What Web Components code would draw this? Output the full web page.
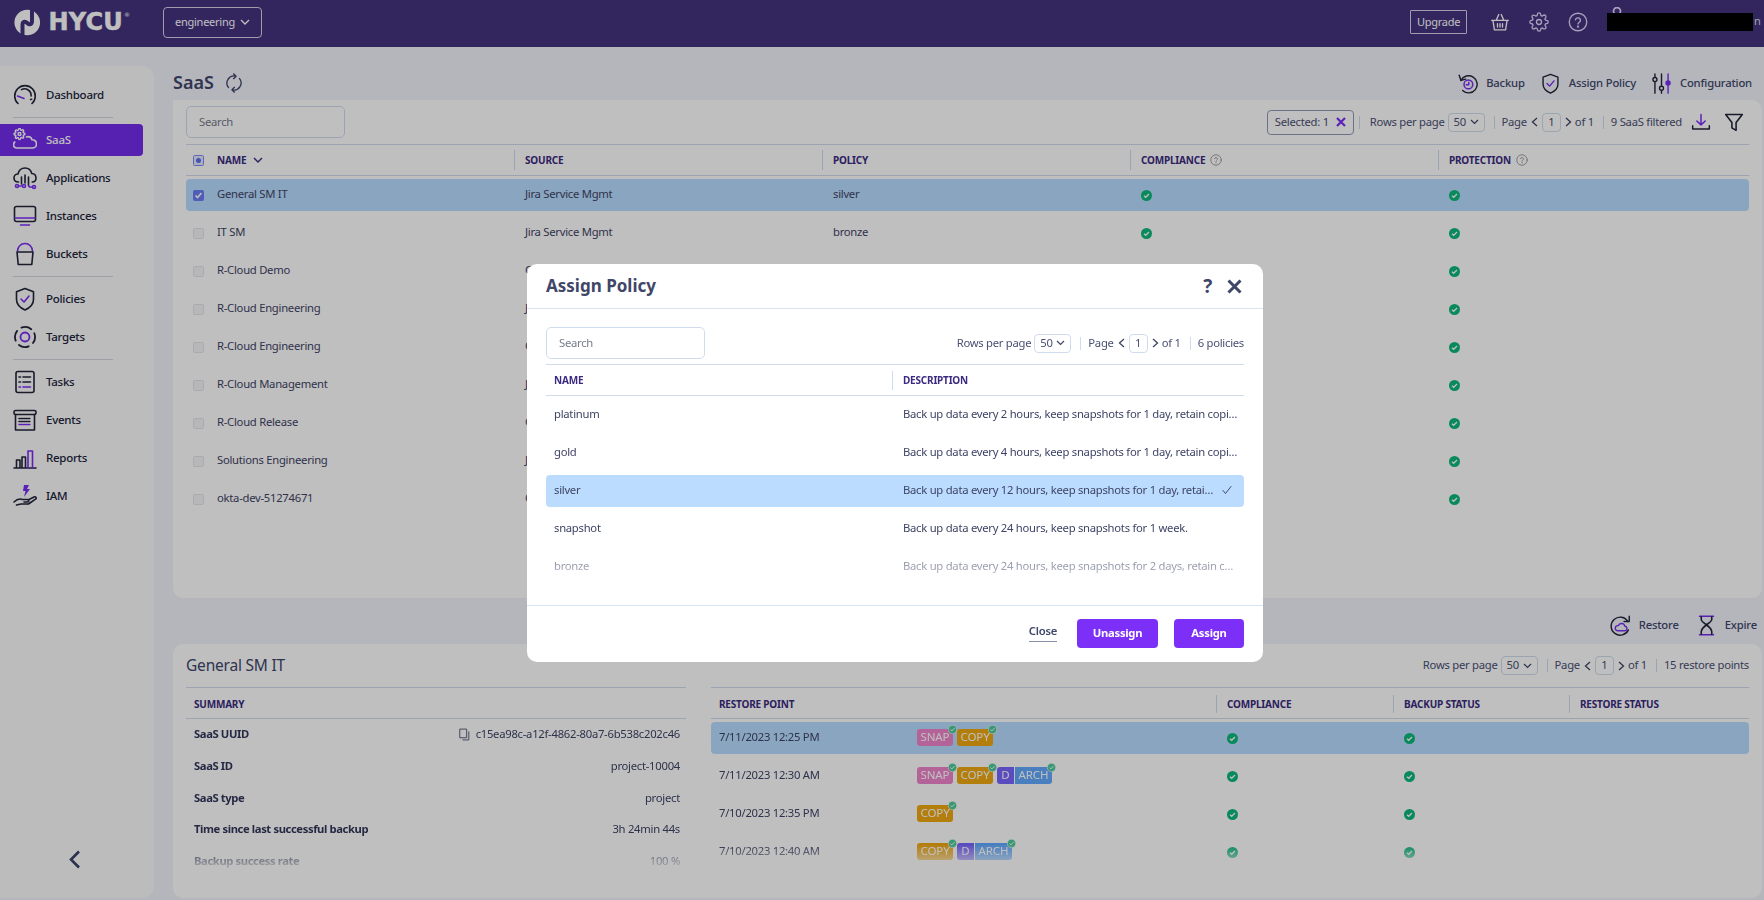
<!DOCTYPE html>
<html lang="en"><head><meta charset="utf-8"><title>HYCU SaaS</title>
<style>
html,body{margin:0;height:900px;overflow:hidden}
body{font:11.25px/1.3 "Noto Sans","Liberation Sans",sans-serif;letter-spacing:-.26px;color:#3e4466;background:#f1f3fa;display:flex;flex-direction:column}
</style></head><body>
<hy-topbar></hy-topbar>
<hy-layout>
  <hy-sidebar slot="side">
    <hy-nav icon="dash">Dashboard</hy-nav><hy-sep></hy-sep>
    <hy-nav icon="saas" active>SaaS</hy-nav>
    <hy-nav icon="apps">Applications</hy-nav>
    <hy-nav icon="monitor">Instances</hy-nav>
    <hy-nav icon="bucket">Buckets</hy-nav><hy-sep></hy-sep>
    <hy-nav icon="shield">Policies</hy-nav>
    <hy-nav icon="target">Targets</hy-nav><hy-sep></hy-sep>
    <hy-nav icon="tasks">Tasks</hy-nav>
    <hy-nav icon="events">Events</hy-nav>
    <hy-nav icon="reports">Reports</hy-nav>
    <hy-nav icon="iam">IAM</hy-nav>
  </hy-sidebar>

  <hy-titlebar title="SaaS">
    <hy-action icon="backup">Backup</hy-action>
    <hy-action icon="shield">Assign Policy</hy-action>
    <hy-action icon="config">Configuration</hy-action>
  </hy-titlebar>

  <hy-panel style="height:498px">
    <hy-toolbar>
      <hy-search slot="left"></hy-search>
      <hy-chip>Selected: 1</hy-chip>
      <hy-pager count="9 SaaS filtered" sep></hy-pager>
      <hy-icon name="download" size="20" style="margin-left:9px"></hy-icon>
      <hy-icon name="filter" size="20" style="margin-left:13px;margin-right:5px"></hy-icon>
    </hy-toolbar>
    <hy-table style="--cols:328px 308px 308px 308px 1fr">
      <hy-row slot="head" head>
        <hy-td pad="7"><hy-box state="mixed"></hy-box><hy-th-label style="margin-left:13px">NAME</hy-th-label><hy-chev style="margin-left:7px"></hy-chev></hy-td>
        <hy-td divider><hy-th-label>SOURCE</hy-th-label></hy-td>
        <hy-td divider><hy-th-label>POLICY</hy-th-label></hy-td>
        <hy-td divider><hy-th-label>COMPLIANCE</hy-th-label><hy-icon name="hint" size="12" style="margin-left:5px"></hy-icon></hy-td>
        <hy-td divider><hy-th-label>PROTECTION</hy-th-label><hy-icon name="hint" size="12" style="margin-left:5px"></hy-icon></hy-td>
      </hy-row>
      <hy-row selected><hy-td pad="7"><hy-box state="checked"></hy-box><span style="margin-left:13px">General SM IT</span></hy-td><hy-td>Jira Service Mgmt</hy-td><hy-td>silver</hy-td><hy-td><hy-ok></hy-ok></hy-td><hy-td><hy-ok></hy-ok></hy-td></hy-row>
      <hy-row><hy-td pad="7"><hy-box></hy-box><span style="margin-left:13px">IT SM</span></hy-td><hy-td>Jira Service Mgmt</hy-td><hy-td>bronze</hy-td><hy-td><hy-ok></hy-ok></hy-td><hy-td><hy-ok></hy-ok></hy-td></hy-row>
      <hy-row><hy-td pad="7"><hy-box></hy-box><span style="margin-left:13px">R-Cloud Demo</span></hy-td><hy-td>C</hy-td><hy-td></hy-td><hy-td></hy-td><hy-td><hy-ok></hy-ok></hy-td></hy-row>
      <hy-row><hy-td pad="7"><hy-box></hy-box><span style="margin-left:13px">R-Cloud Engineering</span></hy-td><hy-td>J</hy-td><hy-td></hy-td><hy-td></hy-td><hy-td><hy-ok></hy-ok></hy-td></hy-row>
      <hy-row><hy-td pad="7"><hy-box></hy-box><span style="margin-left:13px">R-Cloud Engineering</span></hy-td><hy-td>C</hy-td><hy-td></hy-td><hy-td></hy-td><hy-td><hy-ok></hy-ok></hy-td></hy-row>
      <hy-row><hy-td pad="7"><hy-box></hy-box><span style="margin-left:13px">R-Cloud Management</span></hy-td><hy-td>J</hy-td><hy-td></hy-td><hy-td></hy-td><hy-td><hy-ok></hy-ok></hy-td></hy-row>
      <hy-row><hy-td pad="7"><hy-box></hy-box><span style="margin-left:13px">R-Cloud Release</span></hy-td><hy-td>C</hy-td><hy-td></hy-td><hy-td></hy-td><hy-td><hy-ok></hy-ok></hy-td></hy-row>
      <hy-row><hy-td pad="7"><hy-box></hy-box><span style="margin-left:13px">Solutions Engineering</span></hy-td><hy-td>J</hy-td><hy-td></hy-td><hy-td></hy-td><hy-td><hy-ok></hy-ok></hy-td></hy-row>
      <hy-row><hy-td pad="7"><hy-box></hy-box><span style="margin-left:13px">okta-dev-51274671</span></hy-td><hy-td>O</hy-td><hy-td></hy-td><hy-td></hy-td><hy-td><hy-ok></hy-ok></hy-td></hy-row>
    </hy-table>
  </hy-panel>

  <hy-actionbar>
    <hy-action icon="restore">Restore</hy-action>
    <hy-action icon="expire">Expire</hy-action>
  </hy-actionbar>

  <hy-panel style="height:254px" detail>
    <hy-split>
      <hy-section heading="General SM IT">
        <hy-table fade style="--cols:1fr auto;--fade-h:161px;--fade-a:78%;--fade-b:95%;--head-pt:2px">
          <hy-row slot="head" head><hy-td pad="8"><hy-th-label>SUMMARY</hy-th-label></hy-td><hy-td></hy-td></hy-row>
          <hy-row tight><hy-td pad="8"><b>SaaS UUID</b></hy-td><hy-td right><hy-icon name="copy" size="13" style="margin-right:5px"></hy-icon>c15ea98c-a12f-4862-80a7-6b538c202c46</hy-td></hy-row>
          <hy-row tight><hy-td pad="8"><b>SaaS ID</b></hy-td><hy-td right>project-10004</hy-td></hy-row>
          <hy-row tight><hy-td pad="8"><b>SaaS type</b></hy-td><hy-td right>project</hy-td></hy-row>
          <hy-row tight><hy-td pad="8"><b>Time since last successful backup</b></hy-td><hy-td right>3h 24min 44s</hy-td></hy-row>
          <hy-row tight><hy-td pad="8"><b>Backup success rate</b></hy-td><hy-td right>100 %</hy-td></hy-row>
        </hy-table>
      </hy-section>
      <hy-section>
        <hy-pager slot="tools" count="15 restore points"></hy-pager>
        <hy-table fade style="--cols:505px 177px 176px 1fr;--fade-h:161px;--fade-a:78%;--fade-b:95%;--head-pt:2px">
          <hy-row slot="head" head><hy-td pad="8"><hy-th-label>RESTORE POINT</hy-th-label></hy-td><hy-td divider><hy-th-label>COMPLIANCE</hy-th-label></hy-td><hy-td divider><hy-th-label>BACKUP STATUS</hy-th-label></hy-td><hy-td divider><hy-th-label>RESTORE STATUS</hy-th-label></hy-td></hy-row>
          <hy-row selected><hy-td pad="8" style="display:grid;grid-template-columns:198px auto"><span>7/11/2023 12:25 PM</span><hy-badges><hy-badge type="snap" ok>SNAP</hy-badge><hy-badge type="copy" ok>COPY</hy-badge></hy-badges></hy-td><hy-td><hy-ok></hy-ok></hy-td><hy-td><hy-ok></hy-ok></hy-td><hy-td></hy-td></hy-row>
          <hy-row><hy-td pad="8" style="display:grid;grid-template-columns:198px auto"><span>7/11/2023 12:30 AM</span><hy-badges><hy-badge type="snap" ok>SNAP</hy-badge><hy-badge type="copy" ok>COPY</hy-badge><hy-badge type="d" join>D</hy-badge><hy-badge type="arch" ok>ARCH</hy-badge></hy-badges></hy-td><hy-td><hy-ok></hy-ok></hy-td><hy-td><hy-ok></hy-ok></hy-td><hy-td></hy-td></hy-row>
          <hy-row><hy-td pad="8" style="display:grid;grid-template-columns:198px auto"><span>7/10/2023 12:35 PM</span><hy-badges><hy-badge type="copy" ok>COPY</hy-badge></hy-badges></hy-td><hy-td><hy-ok></hy-ok></hy-td><hy-td><hy-ok></hy-ok></hy-td><hy-td></hy-td></hy-row>
          <hy-row><hy-td pad="8" style="display:grid;grid-template-columns:198px auto"><span>7/10/2023 12:40 AM</span><hy-badges><hy-badge type="copy" ok>COPY</hy-badge><hy-badge type="d" join>D</hy-badge><hy-badge type="arch" ok>ARCH</hy-badge></hy-badges></hy-td><hy-td><hy-ok></hy-ok></hy-td><hy-td><hy-ok></hy-ok></hy-td><hy-td></hy-td></hy-row>
        </hy-table>
      </hy-section>
    </hy-split>
  </hy-panel>
</hy-layout>

<hy-modal title="Assign Policy">
  <hy-toolbar modal>
    <hy-search slot="left"></hy-search>
    <hy-pager count="6 policies" plain></hy-pager>
  </hy-toolbar>
  <hy-table fade style="--cols:346px 1fr;--fade-h:209px;--fade-a:68%;--fade-b:96%;--head-h:32px;--head-pt:1px">
    <hy-row slot="head" head><hy-td pad="8"><hy-th-label>NAME</hy-th-label></hy-td><hy-td divider><hy-th-label>DESCRIPTION</hy-th-label></hy-td></hy-row>
    <hy-row><hy-td pad="8">platinum</hy-td><hy-td>Back up data every 2 hours, keep snapshots for 1 day, retain copi…</hy-td></hy-row>
    <hy-row><hy-td pad="8">gold</hy-td><hy-td>Back up data every 4 hours, keep snapshots for 1 day, retain copi…</hy-td></hy-row>
    <hy-row picked><hy-td pad="8">silver</hy-td><hy-td between><span>Back up data every 12 hours, keep snapshots for 1 day, retai…</span><hy-icon name="tick" size="12" style="margin-right:11px"></hy-icon></hy-td></hy-row>
    <hy-row><hy-td pad="8">snapshot</hy-td><hy-td>Back up data every 24 hours, keep snapshots for 1 week.</hy-td></hy-row>
    <hy-row><hy-td pad="8">bronze</hy-td><hy-td>Back up data every 24 hours, keep snapshots for 2 days, retain c…</hy-td></hy-row>
  </hy-table>
  <hy-link slot="footer">Close</hy-link>
  <hy-button slot="footer" style="width:81px">Unassign</hy-button>
  <hy-button slot="footer" style="width:70px">Assign</hy-button>
</hy-modal>

<script>
const P='#7a2cf5';
const GEAR='M12 15a3 3 0 1 0 0-6 3 3 0 0 0 0 6zM19.4 15a1.65 1.65 0 0 0 .33 1.82l.06.06a2 2 0 0 1 0 2.83 2 2 0 0 1-2.83 0l-.06-.06a1.65 1.65 0 0 0-1.82-.33 1.65 1.65 0 0 0-1 1.51V21a2 2 0 0 1-2 2 2 2 0 0 1-2-2v-.09A1.65 1.65 0 0 0 9 19.4a1.65 1.65 0 0 0-1.82.33l-.06.06a2 2 0 0 1-2.83 0 2 2 0 0 1 0-2.83l.06-.06a1.65 1.65 0 0 0 .33-1.82 1.65 1.65 0 0 0-1.51-1H3a2 2 0 0 1-2-2 2 2 0 0 1 2-2h.09A1.65 1.65 0 0 0 4.6 9a1.65 1.65 0 0 0-.33-1.82l-.06-.06a2 2 0 0 1 0-2.83 2 2 0 0 1 2.83 0l.06.06a1.65 1.65 0 0 0 1.82.33H9a1.65 1.65 0 0 0 1-1.51V3a2 2 0 0 1 2-2 2 2 0 0 1 2 2v.09a1.65 1.65 0 0 0 1 1.51 1.65 1.65 0 0 0 1.82-.33l.06-.06a2 2 0 0 1 2.83 0 2 2 0 0 1 0 2.83l-.06.06a1.65 1.65 0 0 0-.33 1.82V9a1.65 1.65 0 0 0 1.51 1H21a2 2 0 0 1 2 2 2 2 0 0 1-2 2h-.09a1.65 1.65 0 0 0-1.51 1z';
const ICONS={
 dash:`<path d="M5 20.5a10.3 10.3 0 1 1 14 0"/><path d="M8.5 6.6a6.6 6.6 0 0 1 9.6 6.4M17.6 16.5l1-.2"/><path stroke="${P}" d="M4.5 13l6.5 2.5"/>`,
 saas:`<g transform="translate(.5 0) scale(.5)" stroke-width="2.8"><path d="${GEAR}"/></g><path d="M13.5 9c2.4-1.2 5 .4 5.5 2.8 2.6-.2 4.5 1.7 4.5 4.2s-2 4-4.2 4H4c-2.3 0-3.5-1.5-3.5-3.2 0-1.2.5-2.2 1.3-2.8"/>`,
 apps:`<path d="M5.5 16C2.800 16 1 14.300 1 12s1.800-4 4-4c.8-3.500 3.500-6 7-6 3.300 0 6 2.300 6.800 5.500 2.500.2 4.200 2.100 4.200 4.500 0 2.300-1.600 4-3.800 4"/><path d="M8.500 11v7M12 9v8M15.500 11v8"/><circle cx="4" cy="20" r="1.500" stroke="${P}"/><path stroke="${P}" d="M5.500 20h3"/><circle cx="11" cy="20" r="1.500" stroke="${P}"/><circle cx="21" cy="21" r="1.500" stroke="${P}"/><path stroke="${P}" d="M15.500 19.500l1 1.500h3"/>`,
 monitor:`<rect x="1.500" y="2.500" width="21" height="15" rx="2"/><path stroke="${P}" d="M2 14h20M7.500 21h9"/>`,
 bucket:`<path stroke="${P}" d="M4.500 9a7.500 7.500 0 0 1 15 0"/><path d="M4 10h16l-1.200 12.500H5.200z"/>`,
 shield:`<path d="M12 1.500l8.500 3.200v7.800c0 5-3.800 8.400-8.500 10.500-4.700-2.100-8.500-5.500-8.500-10.500V4.700z"/><path stroke="${P}" d="M8 12l3 3 5-6"/>`,
 target:`<circle cx="12" cy="12" r="10" stroke-dasharray="10.200 5.500" transform="rotate(-22 12 12)" stroke-width="1.800"/><circle cx="12" cy="12" r="4.500" stroke="${P}" stroke-width="1.800"/>`,
 tasks:`<rect x="3" y="1.500" width="18" height="21" rx="2"/><path d="M10 7h7.500M10 12h7.500M6 7h1.500M6 12h1.500"/><path stroke="${P}" d="M10 17h7.500M6 17h1.500"/>`,
 events:`<rect x="1" y="2.500" width="22" height="4" rx="1.500"/><path d="M2.500 6.500V22h19V6.500"/><path stroke-dasharray="1.200 1.200" d="M6 10.500h12M6 13.500h12"/><path stroke-dasharray="1.200 1.200" stroke="${P}" d="M6 16.500h12"/>`,
 reports:`<path d="M1 22h22M3.500 22v-8h3.500v8M9 22V11h3.500v11"/><path stroke="${P}" d="M15 22V5h4.500v17"/>`,
 iam:`<path fill="${P}" stroke="none" d="M11 1h5l-2 4h3l-6 8 1.500-6H10z"/><path d="M1 18c3-3 6-3.500 8.500-2.500h5c1.800 0 1.800 2.500 0 2.500H11M15 16l6-3c1.800-.8 3 1 1.500 2.200l-7 4.800H8l-4.500 1"/>`,
 backup:`<path d="M4.500 8.500a9.800 9.800 0 1 1 2 11.500"/><path d="M2.500 2.500l2 6 5.500-1.500"/><circle cx="13" cy="13" r="5" stroke="${P}" stroke-width="1.700"/><path stroke="${P}" d="M13.500 10.500v3h-3"/>`,
 config:`<path d="M4.500 1v4M4.500 10v13M12 1v14M12 20v3"/><circle cx="4.500" cy="7.500" r="2.300"/><circle cx="12" cy="17.500" r="2.300"/><path stroke="${P}" d="M19.500 1v8M19.500 14v9"/><circle cx="19.500" cy="11.500" r="2.300" stroke="${P}" fill="${P}"/>`,
 restore:`<path d="M20.500 7.500A10.300 10.300 0 1 0 21 17"/><path d="M22 1.500v6h-6"/><path stroke="${P}" d="M8.500 18h8a2.600 2.600 0 0 0 .5-5.200 4 4 0 0 0-7.600-.6A2.900 2.900 0 0 0 8.500 18z"/>`,
 expire:`<path stroke="${P}" stroke-width="1.800" d="M4 1.500h16M4 22.500h16"/><path stroke-width="1.800" d="M6 2v3c0 4 12 8 12 14v3M18 2v3c0 4-12 8-12 14v3"/>`,
 download:`<path stroke-width="1.800" d="M2 16.500v4h20v-4"/><path stroke="${P}" stroke-width="1.800" d="M12 3v12.500M7 10.800l5 4.700 5-4.700"/>`,
 filter:`<path stroke-width="1.900" d="M2 3h20l-7.500 9.500V22l-5-3v-6.500z"/>`,
 refresh:`<path d="M5.500 17.500A8.500 8.500 0 0 1 14 3.800M11.500 1l3 2.800-3 3"/><path d="M18.500 6.500A8.500 8.500 0 0 1 10 20.200M12.500 23l-3-2.800 3-3"/>`,
 basket:`<path d="M2 10h20M3.500 10l1.800 11.500h13.400L20.500 10M7.500 10l3-7M16.500 10l-3-7M9 14v4M12 14v4M15 14v4"/>`,
 gear:`<path d="${GEAR}"/>`,
 help:`<circle cx="12" cy="12" r="10.500"/><path d="M9 9.300a3 3 0 0 1 5.900.8c0 2-2.900 2.200-2.900 4.400"/><circle cx="12" cy="17.500" r=".6"/>`,
 hint:`<circle cx="12" cy="12" r="10.500"/><path d="M9 9.300a3 3 0 0 1 5.900.8c0 2-2.900 2.200-2.900 4.400M12 17v1"/>`,
 copy:`<path d="M4 2h12v16H4zM20 7v15H9"/>`,
 tick:`<path d="M4 13l5 6L20 5"/>`,
 user:`<circle cx="12" cy="7" r="5"/>`
};
const define=(name,css,html)=>{
  customElements.define(name,class extends HTMLElement{
    connectedCallback(){
      if(this.shadowRoot)return;
      const root=this.attachShadow({mode:'open'});
      const body=typeof html==='function'?html(this):html;
      root.innerHTML=`<style>${css}</style>${body}`;
    }
  });
};
const svg=(name,size,color)=>`<svg viewBox="0 0 24 24" width="${size}" height="${size}" fill="none" stroke="${color||'currentColor'}" stroke-width="1.600" stroke-linecap="round" stroke-linejoin="round" style="display:block;flex:none">${ICONS[name]}</svg>`;

define('hy-icon',':host{display:inline-flex;flex:none;color:#22243a}:host([name=hint]){color:#8a8a8a}:host([name=copy]){color:#44486a}',
  e=>svg(e.getAttribute('name'),e.getAttribute('size')||24));

define('hy-topbar',`
:host{display:flex;align-items:center;height:47px;flex:none;box-sizing:border-box;background:#44337f;color:#fff;padding:0 11px 3px 0;position:relative;z-index:1}
.logo{display:flex;align-items:center;margin-left:13px;width:117px}
.word{font:700 24px/1 "DejaVu Sans",sans-serif;letter-spacing:.2px;-webkit-text-stroke:.5px #fff;margin-left:7px;color:#fff}
.r{font:400 6px/1 "DejaVu Sans",sans-serif;letter-spacing:0;align-self:flex-start;margin-top:3px;margin-left:1px}
.tenant{display:flex;align-items:center;justify-content:center;gap:5px;margin-left:33px;width:99px;height:31px;box-sizing:border-box;border:1px solid #d4d0e4;border-radius:4px;font-size:11px}
.right{margin-left:auto;display:flex;align-items:center;gap:19px}
.up{display:flex;align-items:center;justify-content:center;width:57px;height:24px;box-sizing:border-box;border:1px solid #d4d0e4;border-radius:1px;font-size:11px;margin-right:4px}
.user{position:relative;width:146px;height:18px;background:#000}
.user svg{position:absolute;left:3px;top:-6px;z-index:-1}
.n{position:absolute;left:147px;top:1px;font-size:11px;color:#ddd}
.lil{color:#e2d4fa}
`,()=>`
<div class="logo"><svg width="30" height="27" viewBox="0 0 30 27"><circle cx="15" cy="13.500" r="13.500" fill="#fff"/><path d="M10 28V16c0-3.500 2.500-4.500 5-2s5 1.500 5-2V-1" fill="none" stroke="#44337f" stroke-width="4.200"/></svg><span class="word">HYCU</span><span class="r">®</span></div>
<div class="tenant"><span>engineering</span><svg width="10" height="7" viewBox="0 0 10 7" fill="none" stroke="#fff" stroke-width="1.300"><path d="M1 1l4 4 4-4"/></svg></div>
<div class="right"><div class="up">Upgrade</div>${svg('basket',20)}<span class="lil">${svg('gear',20)}</span><span class="lil">${svg('help',20)}</span><div class="user"><svg width="14" height="14" viewBox="0 0 24 24"><circle cx="12" cy="7" r="6" fill="none" stroke="#e2d4fa" stroke-width="3"/></svg><span class="n">n</span></div></div>`);

define('hy-layout',`
:host{display:grid;grid-template-columns:154px 1fr;column-gap:19px;flex:1;min-height:0;padding:19px 2px 2px 0;box-sizing:border-box}
.side{grid-row:1;display:flex;min-height:0}
.main{display:flex;flex-direction:column;min-width:0}
`,`<div class="side"><slot name="side"></slot></div><div class="main"><slot></slot></div>`);

define('hy-sidebar',`
:host{display:flex;flex-direction:column;flex:1;background:#fbfbfd;border-radius:0 12px 12px 0;padding-top:10px;box-sizing:border-box}
button{all:unset;margin:auto 0 29px 68px;display:block;line-height:0}
`,`<slot></slot><button aria-label="Collapse"><svg width="13" height="19" viewBox="0 0 13 19" fill="none" stroke="#3a4068" stroke-width="2.600"><path d="M11 1.500L3 9.500l8 8"/></svg></button>`);

define('hy-nav',`
:host{display:flex;height:38px;flex:none;padding:3px 11px 3px 0;box-sizing:border-box;color:#22243a;font-size:11.5px;font-weight:500}
.b{flex:1;display:flex;align-items:center;gap:9px;padding-left:13px;border-radius:0 4px 4px 0}
:host([active]) .b{background:#732beb;color:#fff}
`,e=>`<div class="b">${svg(e.getAttribute('icon'),24)}<slot></slot></div>`);

define('hy-sep',':host{display:block;height:1px;flex:none;margin:3px 41px 3px 13px;background:#d4d6de}','');

define('hy-titlebar',`
:host{display:flex;align-items:center;height:34px;flex:none;padding-right:10px}
h1{margin:0;font-size:18px;font-weight:600;letter-spacing:0;color:#40466c}
.r{margin-left:10px;color:#40466c;line-height:0}
.a{margin-left:auto;display:flex;gap:15px}
`,e=>`<h1>${e.getAttribute('title')}</h1><span class="r">${svg('refresh',20)}</span><div class="a"><slot></slot></div>`);

define('hy-action',`
:host{display:flex;align-items:center;gap:8px;font-size:11.25px;font-weight:500;letter-spacing:-.18px;color:#40466c}
span{color:#22243a;display:flex}
`,e=>`<span>${svg(e.getAttribute('icon'),21)}</span><slot></slot>`);

define('hy-actionbar',`
:host{display:flex;align-items:center;justify-content:flex-end;height:46px;flex:none;box-sizing:border-box;padding:8px 5px 0 0;gap:17px}
`,`<slot></slot>`);

define('hy-panel',`
:host{display:block;flex:none;background:#fff;border-radius:0 10px 10px 10px;padding:6px 13px 0;box-sizing:border-box;overflow:hidden}
:host([detail]){padding-top:0;border-radius:10px}
`,`<slot></slot>`);

define('hy-toolbar',`
:host{display:flex;align-items:center;height:32px;margin-bottom:6px}
:host([modal]){margin-bottom:5px}
.r{margin-left:auto;display:flex;align-items:center}
`,`<slot name="left"></slot><div class="r"><slot></slot></div>`);

define('hy-search',`
:host{display:flex;align-items:center;width:159px;height:32px;box-sizing:border-box;border:1px solid #cfdcee;border-radius:5px;padding-left:12px;color:#777b8a;font-size:11.25px;background:#fff}
`,`Search`);

define('hy-chip',`
:host{display:flex;align-items:center;gap:7px;height:25px;width:87px;box-sizing:border-box;justify-content:center;border:1px solid #8f98b5;border-radius:4px;color:#4a5074;margin-right:5px}
`,`<slot></slot><svg width="10" height="10" viewBox="0 0 10 10" fill="none" stroke="${P}" stroke-width="2.200"><path d="M1 1l8 8M9 1l-8 8"/></svg>`);

define('hy-pager',`
:host{display:flex;align-items:center;white-space:nowrap;color:#4a5074}
.sel{display:flex;align-items:center;justify-content:space-between;width:37px;height:19px;box-sizing:border-box;border:1px solid #cfdcee;border-radius:4px;padding:0 5px;margin:0 9px 0 3px}
.box{display:flex;align-items:center;justify-content:center;width:19px;height:19px;box-sizing:border-box;border:1px solid #cfdcee;border-radius:4px;margin:0 4px}
.sep{width:1px;height:13px;background:#cfdcee;flex:none}
.lead{margin-right:10px}
.pg{margin-left:7px;margin-right:4px}
.of{margin-left:3px;margin-right:9px}
.ct{margin-left:7px}
svg{display:block;flex:none}
`,e=>{
 const ch=d=>`<svg width="7" height="10" viewBox="0 0 7 10" fill="none" stroke="#3e4466" stroke-width="1.300"><path d="${d}"/></svg>`;
 return `${e.hasAttribute('sep')?'<i class="sep lead"></i>':''}<span>Rows per page</span><span class="sel">50<svg width="9" height="6" viewBox="0 0 9 6" fill="none" stroke="#3e4466" stroke-width="1.200"><path d="M1 1l3.500 3.500L8 1"/></svg></span><i class="sep"></i><span class="pg">Page</span>${ch('M6 1L1.500 5 6 9')}<span class="box">1</span>${ch('M1 1l4.500 4L1 9')}<span class="of">of 1</span><i class="sep"></i><span class="ct">${e.getAttribute('count')}</span>`;
});

define('hy-table',`
:host{display:block}
.head{border-top:1px solid #cfdcee;border-bottom:1px solid #cfdcee;box-sizing:border-box;height:var(--head-h,32px);padding-top:var(--head-pt,0);display:grid}
.body{display:flex;flex-direction:column}
:host([fade]) .body{height:var(--fade-h);overflow:hidden;-webkit-mask-image:linear-gradient(#000 var(--fade-a),transparent var(--fade-b));mask-image:linear-gradient(#000 var(--fade-a),transparent var(--fade-b))}
`,`<div class="head"><slot name="head"></slot></div><div class="body"><slot></slot></div>`);

define('hy-row',`
:host{display:grid;grid-template-columns:var(--cols);height:32px;flex:none;margin:3px 0;border-radius:4px;align-items:stretch;color:#3e4466;padding-bottom:2px;box-sizing:border-box}
:host([head]){margin:0;height:auto;border-radius:0;padding-bottom:0}
:host([tight]){margin:0;height:31.800px;padding-bottom:1px}
:host([selected]){background:#b9ddff}
:host([picked]){background:#bbdcfe}
`,`<slot></slot>`);

define('hy-td',`
:host{display:flex;align-items:center;min-width:0;white-space:nowrap;padding-left:11px;box-sizing:border-box;position:relative}
:host([pad="7"]){padding-left:7px}
:host([pad="8"]){padding-left:8px}
:host([right]){padding:0 6px 0 0;justify-content:flex-end}
:host([between]){justify-content:space-between}
:host([divider])::before{content:"";position:absolute;left:0;top:5px;bottom:5px;width:1px;background:#cfdcee}
::slotted(b){font-weight:700;color:#33375a;letter-spacing:-.4px}
`,`<slot></slot>`);

define('hy-th-label',`:host{font-size:10px;font-weight:700;color:#3b2a80;letter-spacing:-.2px}`,`<slot></slot>`);

define('hy-chev',`:host{display:inline-flex}`,`<svg width="10" height="7" viewBox="0 0 10 7" fill="none" stroke="#3b2a80" stroke-width="1.400"><path d="M1 1l4 4 4-4"/></svg>`);

define('hy-box',`
:host{display:inline-flex;flex:none;width:11px;height:11px;margin-top:2px;box-sizing:border-box;border:1px solid #e3e4e8;border-radius:1.500px;background:#f5f5f7;align-items:center;justify-content:center}
:host([state=mixed]){margin-top:0;background:#e4e9fb;border-color:#7a8cf0}
:host([state=checked]){background:#6a7cf5;border-color:#6a7cf5}
i{width:5px;height:5px;border-radius:50%;background:#5e6ff0}
`,e=>{
 const s=e.getAttribute('state');
 return s==='checked'?`<svg width="9" height="9" viewBox="0 0 9 9" fill="none" stroke="#fff" stroke-width="1.600"><path d="M1.500 4.500l2 2 4-4.500"/></svg>`:s==='mixed'?'<i></i>':'';
});

define('hy-ok',`:host{display:inline-flex;line-height:0;margin-top:2px}`,`<svg width="11" height="11" viewBox="0 0 11 11"><circle cx="5.500" cy="5.500" r="5.500" fill="#0db87b"/><path d="M3 5.700l1.700 1.600L8 4" fill="none" stroke="#fff" stroke-width="1.300"/></svg>`);

define('hy-badges',`:host{display:flex;align-items:center;gap:4px;margin-left:0}`,`<slot></slot>`);
define('hy-badge',`
:host{display:inline-flex;align-items:center;justify-content:center;height:17px;box-sizing:border-box;width:36px;border-radius:3px;font-size:11.5px;letter-spacing:-.1px;color:#fff;position:relative;flex:none}
:host([type=snap]){background:#f185cd}
:host([type=copy]){background:#f0a810}
:host([type=d]){background:#7966ff;width:17px;margin-right:-3px;border-radius:3px 0 0 3px}
:host([type=arch]){background:#63aaff;width:37px;border-radius:0 3px 3px 0}
svg{position:absolute;right:-4px;top:-4px}
`,e=>`<slot></slot>${e.hasAttribute('ok')?'<svg width="9" height="9" viewBox="0 0 9 9"><circle cx="4.500" cy="4.500" r="4.200" fill="#4dcb9b" stroke="#fff" stroke-width=".6"/><path d="M2.500 4.600l1.400 1.300 2.600-2.700" fill="none" stroke="#fff" stroke-width="1"/></svg>':''}`);

define('hy-split',`:host{display:grid;grid-template-columns:500px 1fr;column-gap:25px}`,`<slot></slot>`);
define('hy-section',`
:host{display:block;min-width:0}
.top{display:flex;align-items:center;justify-content:space-between;height:43px}
h2{margin:0;font-size:15.500px;font-weight:400;letter-spacing:-.2px;color:#40466c}
.t{margin-left:auto}
`,e=>`<div class="top">${e.hasAttribute('heading')?`<h2>${e.getAttribute('heading')}</h2>`:''}<div class="t"><slot name="tools"></slot></div></div><slot></slot>`);

define('hy-modal',`
:host{position:fixed;inset:0;background:rgba(0,0,0,.25);z-index:5}
.d{position:absolute;left:527px;top:264px;width:736px;height:398px;background:#fff;border-radius:10px;display:flex;flex-direction:column;box-sizing:border-box}
header{display:flex;align-items:center;height:44px;border-bottom:1px solid #d9e4f3;padding:0 21px 0 19px;flex:none;color:#3f4668}
h3{margin:0;font-size:17px;font-weight:700;letter-spacing:0;flex:1}
.q{font-size:19px;font-weight:700;margin-right:15px}
.m{padding:18px 19px 0;flex:1;min-height:0}
footer{display:flex;align-items:center;justify-content:flex-end;height:57px;box-sizing:border-box;flex:none;border-top:1px solid #d9e4f3;padding:0 19px 2px;gap:16px}
`,e=>`<div class="d" role="dialog"><header><h3>${e.getAttribute('title')}</h3><span class="q">?</span><svg width="15" height="15" viewBox="0 0 15 15" fill="none" stroke="#3f4668" stroke-width="3"><path d="M1.500 1.500l12 12M13.500 1.500l-12 12"/></svg></header><div class="m"><slot></slot></div><footer><slot name="footer"></slot></footer></div>`);

define('hy-link',`:host{display:inline-block;font-weight:600;color:#3f4668;font-size:11.250px;padding-bottom:2px;border-bottom:1px solid #8b90aa;margin-right:4px}`,`<slot></slot>`);
define('hy-button',`:host{display:flex;align-items:center;justify-content:center;height:29px;background:#7b2ff7;color:#fff;font-weight:700;font-size:11.250px;border-radius:4px;box-sizing:border-box}`,`<slot></slot>`);
</script>
</body></html>
